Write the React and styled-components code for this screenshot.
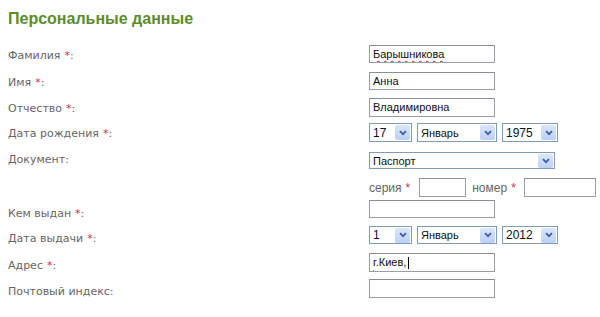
import React from "react";
import styled, { createGlobalStyle } from "styled-components";

const Global = createGlobalStyle`
  body {
    margin: 0;
    background: #fff;
    font-family: "Liberation Sans", Arial, sans-serif;
  }
`;

const Page = styled.div`
  padding: 9px 8px 0 8px;
`;

const Title = styled.h2`
  margin: 0 0 16px 0;
  font-size: 16px;
  line-height: 20px;
  font-weight: bold;
  color: #5c8c2c;
`;

const Row = styled.div`
  display: grid;
  grid-template-columns: 361px auto;
  align-items: start;
  height: ${p => p.h}px;
`;

const Label = styled.div`
  padding-top: ${p => (p.off != null ? p.off : 4)}px;
  font-family: "DejaVu Sans", Verdana, sans-serif;
  font-size: 11px;
  line-height: 14px;
  color: #666;
`;

const Star = styled.span`
  color: #cc3344;
  margin-left: 4px;
`;

const Cell = styled.div`
  display: flex;
  align-items: center;
  gap: ${p => p.gap || 5}px;
`;

const Field = styled.div`
  box-sizing: border-box;
  width: ${p => p.w || 126}px;
  height: ${p => p.h || 18}px;
  border: 1px solid #9a9fa5;
  border-top-color: #8a8f95;
  background: #fff;
  padding: 0 3px;
  font-size: 11px;
  line-height: ${p => (p.h || 18) - 2}px;
  color: #111;
  white-space: nowrap;
  overflow: hidden;
`;

const Wavy = styled.span`
  text-decoration: underline wavy #d42020;
  text-decoration-thickness: 1px;
  text-underline-offset: 2px;
`;

const Caret = styled.span`
  display: inline-block;
  width: 1px;
  height: 12px;
  background: #000;
  vertical-align: middle;
  margin-left: 2px;
`;

const Select = styled.div`
  box-sizing: border-box;
  width: ${p => p.w}px;
  height: ${p => p.h || 19}px;
  border: 1px solid #7f9db9;
  background: #fff;
  display: flex;
  align-items: center;
  justify-content: space-between;
  padding: 0 1px 0 3px;
  font-size: ${p => p.fs || 12}px;
  color: #111;
`;

const ArrowBox = styled.span`
  width: 15px;
  height: ${p => p.s || 15}px;
  background: linear-gradient(#dbe6fb, #bcd0f7);
  border-radius: 2px;
  display: flex;
  align-items: center;
  justify-content: center;
`;

const Inline = styled.span`
  font-size: 12px;
  color: #666;
  margin: 0 ${p => p.mr || 4}px 0 ${p => p.ml || 0}px;
`;

const Arrow = ({ s }) => (
  <ArrowBox s={s}>
    <svg width="8" height="6" viewBox="0 0 8 6">
      <path d="M1 1.2 L4 4.2 L7 1.2" fill="none" stroke="#3d5fa8" strokeWidth="1.8" />
    </svg>
  </ArrowBox>
);

const Drop = ({ w, h, fs, s, children }) => (
  <Select w={w} h={h} fs={fs}>
    <span>{children}</span>
    <Arrow s={s} />
  </Select>
);

export default function App() {
  return (
    <Page>
      <Global />
      <Title>Персональные данные</Title>
      <Row h={27}>
        <Label>Фамилия<Star>*</Star>:</Label>
        <Cell><Field><Wavy>Барышникова</Wavy></Field></Cell>
      </Row>
      <Row h={26}>
        <Label>Имя<Star>*</Star>:</Label>
        <Cell><Field>Анна</Field></Cell>
      </Row>
      <Row h={25}>
        <Label off={4}>Отчество<Star>*</Star>:</Label>
        <Cell><Field h={19}>Владимировна</Field></Cell>
      </Row>
      <Row h={29}>
        <Label off={4}>Дата рождения<Star>*</Star>:</Label>
        <Cell>
          <Drop w={43}>17</Drop>
          <Drop w={80} fs={11}>Январь</Drop>
          <Drop w={56}>1975</Drop>
        </Cell>
      </Row>
      <Row h={26}>
        <Label off={1}>Документ:</Label>
        <Cell><Drop w={186} h={17} fs={11} s={14}>Паспорт</Drop></Cell>
      </Row>
      <Row h={22}>
        <Label />
        <Cell gap={0}>
          <Inline>серия<Star>*</Star></Inline>
          <Field w={47} h={19} />
          <Inline ml={1} mr={3}>номер<Star>*</Star></Inline>
          <Field w={72} h={19} />
        </Cell>
      </Row>
      <Row h={26}>
        <Label off={7}>Кем выдан<Star>*</Star>:</Label>
        <Cell><Field /></Cell>
      </Row>
      <Row h={27}>
        <Label off={6}>Дата выдачи<Star>*</Star>:</Label>
        <Cell>
          <Drop w={43} h={18}>1</Drop>
          <Drop w={80} h={18} fs={11}>Январь</Drop>
          <Drop w={56} h={18}>2012</Drop>
        </Cell>
      </Row>
      <Row h={26}>
        <Label off={6}>Адрес<Star>*</Star>:</Label>
        <Cell><Field h={19}><Wavy>г</Wavy>.Киев,<Caret /></Field></Cell>
      </Row>
      <Row h={26}>
        <Label off={6}>Почтовый индекс:</Label>
        <Cell><Field h={19} /></Cell>
      </Row>
    </Page>
  );
}
